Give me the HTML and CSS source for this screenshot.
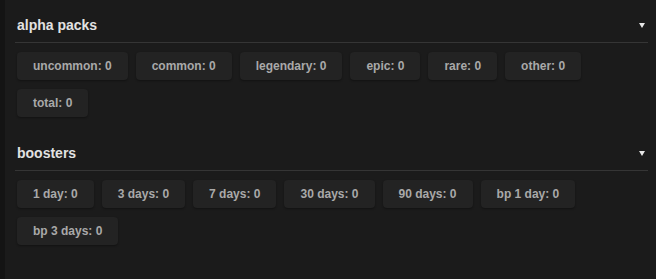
FILE: index.html
```html
<!DOCTYPE html>
<html lang="en">
<head>
    <meta charset="UTF-8">
    <title>Inventory</title>
    <link rel="stylesheet" href="styles.css">
</head>
<body>

    <div class="panel">
        <div class="section">
            <div class="section-head">
                <span class="section-title">alpha packs</span>
                <span class="caret"></span>
            </div>
            <div class="chips">
                <div class="chip">uncommon: 0</div>
                <div class="chip">common: 0</div>
                <div class="chip">legendary: 0</div>
                <div class="chip">epic: 0</div>
                <div class="chip">rare: 0</div>
                <div class="chip">other: 0</div>
                <div class="chip">total: 0</div>
            </div>
        </div>

        <div class="section">
            <div class="section-head">
                <span class="section-title">boosters</span>
                <span class="caret"></span>
            </div>
            <div class="chips">
                <div class="chip">1 day: 0</div>
                <div class="chip">3 days: 0</div>
                <div class="chip">7 days: 0</div>
                <div class="chip">30 days: 0</div>
                <div class="chip">90 days: 0</div>
                <div class="chip">bp 1 day: 0</div>
                <div class="chip">bp 3 days: 0</div>
            </div>
        </div>
    </div>

</body>
</html>
```

FILE: styles.css
```css
html, body {
    height: 100%;
}
body {
    margin: 0;
    background: #141414;
    font-family: "Liberation Sans", Arial, sans-serif;
    padding-left: 5px;
    box-sizing: border-box;
}
.panel {
    background: #1b1b1b;
    min-height: 100%;
    padding: 10px 8px 0 10px;
    box-sizing: border-box;
}
.section {
    margin-bottom: 21px;
}
.section-head {
    display: flex;
    align-items: center;
    justify-content: space-between;
    padding: 6px 2px 8px;
    border-bottom: 1px solid #353535;
}
.section-title {
    color: #e2e2e2;
    font-size: 14px;
    font-weight: bold;
    line-height: 18px;
}
.caret {
    width: 0;
    height: 0;
    border-left: 3px solid transparent;
    border-right: 3px solid transparent;
    border-top: 5px solid #e6e6e6;
    margin-right: 1px;
}
.chips {
    display: flex;
    flex-wrap: wrap;
    gap: 9px 8px;
    padding: 9px 2px 0;
}
.chip {
    background: #232323;
    color: #a9a9a9;
    font-size: 12px;
    font-weight: bold;
    line-height: 16px;
    padding: 6px 16px;
    border-radius: 4px;
    box-shadow: 0 1px 2px rgba(0, 0, 0, 0.35);
}
```
